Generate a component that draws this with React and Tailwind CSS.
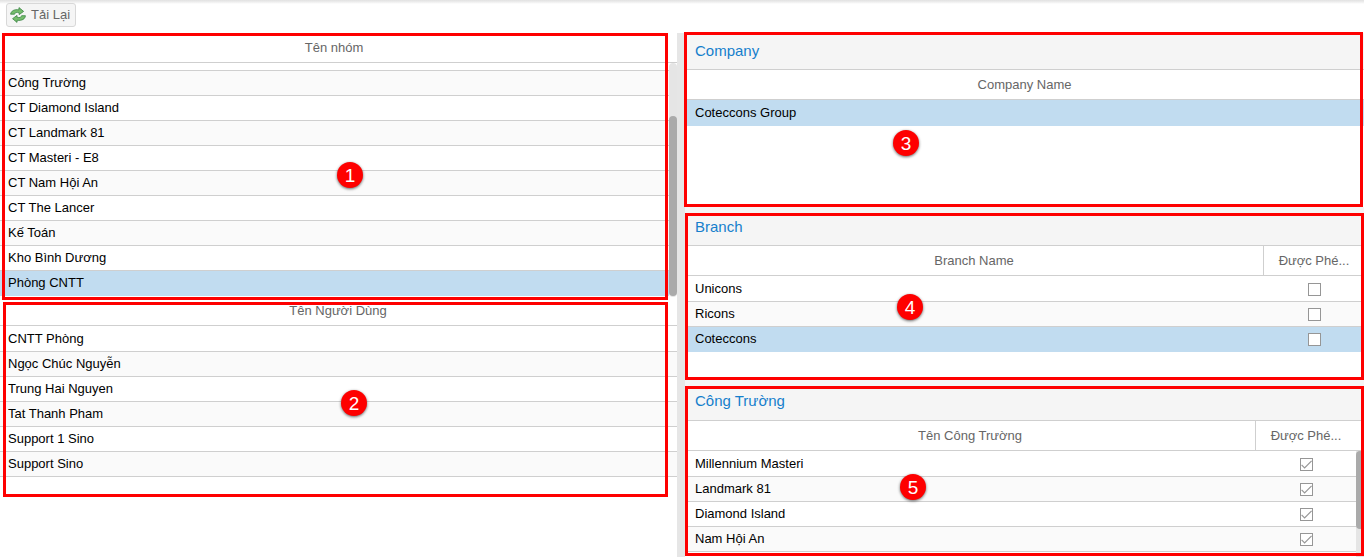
const groups = ['Công Trường', 'CT Diamond Island', 'CT Landmark 81', 'CT Masteri - E8', 'CT Nam Hội An', 'CT The Lancer', 'Kế Toán', 'Kho Bình Dương', 'Phòng CNTT'];
const users = ['CNTT Phòng', 'Ngọc Chúc Nguyễn', 'Trung Hai Nguyen', 'Tat Thanh Pham', 'Support 1 Sino', 'Support Sino'];
const branches = ['Unicons', 'Ricons', 'Coteccons'];
const sites = ['Millennium Masteri', 'Landmark 81', 'Diamond Island', 'Nam Hội An'];

function Check({ checked }) {
  return (
    <svg width="13" height="13" viewBox="0 0 13 13" className="block shrink-0">
      <rect x="0.5" y="0.5" width="12" height="12" fill="#fff" stroke="#969696" />
      {checked && <path d="M1.6 6.8L4.6 9.8L11.6 2.8" fill="none" stroke="#969696" strokeWidth="1.2" />}
    </svg>
  );
}

function Row({ text, alt, selected, first, check, checkCell = '' }) {
  const bg = selected ? 'bg-[#c1dcf0] border-[#c1dcf0]' : alt ? 'bg-[#fafafa] border-[#cfcfcf]' : 'bg-white border-[#cfcfcf]';
  return (
    <div className={`flex shrink-0 items-center border-b text-[13px] text-black ${first ? 'h-[26px] pt-px' : 'h-[25px]'} ${bg}`}>
      <div className="min-w-0 flex-1 truncate">{text}</div>
      {check !== undefined && (
        <div className={`flex justify-center ${checkCell}`}>
          <Check checked={check} />
        </div>
      )}
    </div>
  );
}

function Title({ children, className }) {
  return <div className={`flex shrink-0 items-center border-b border-[#cfcfcf] bg-[#f5f5f5] pl-2.5 text-[15px] text-[#157fcc] ${className}`}>{children}</div>;
}

function ColumnHead({ children, className = 'h-[30px]' }) {
  return <div className={`flex shrink-0 border-b border-[#cfcfcf] text-[13px] text-[#666] ${className}`}>{children}</div>;
}

function Badge({ n, className }) {
  return (
    <div className={`absolute flex size-[26px] items-center justify-center rounded-full bg-[#fe0000] text-[19px] leading-none text-white shadow-[0_1px_3px_rgba(0,0,0,0.6)] ${className}`}>{n}</div>
  );
}

function ReloadIcon() {
  return (
    <svg width="16" height="16" viewBox="0 0 16 16">
      <path d="M0.6 7.2C1 4 4.4 2 8.8 2.9L9 0.6L13.6 4.4L9.2 7.6V5.8C6.5 4.9 4.8 5.4 4.5 7.2Z" fill="#76bd6c" stroke="#398442" strokeWidth="0.8" />
      <path d="M15.4 8.7C15.2 12 11.8 14 7.2 13.2L7 15.4L2.6 11.7L7 8.4V10.2C9.5 11.1 11.3 10.5 11.6 8.7Z" fill="#76bd6c" stroke="#398442" strokeWidth="0.8" />
    </svg>
  );
}

export default function App() {
  return (
    <div className="relative flex h-[557px] w-[1364px] flex-col overflow-hidden bg-white font-['Liberation_Sans',Arial,sans-serif] leading-4">
      <div className="flex h-[33px] shrink-0 bg-[linear-gradient(#e1e1e1,#eeeeee_2px,#fff_4px)] pt-[3px] pl-1.5">
        <button className="flex h-6 w-[70px] items-center gap-[5px] rounded-[3px] border border-[#d8d8d8] bg-[#f5f5f5] pl-[3px] text-[13px] text-[#666]">
          <ReloadIcon />
          Tải Lại
        </button>
      </div>
      <div className="flex min-h-0 flex-1">
        <section className="flex w-[677px] flex-col">
          <ColumnHead>
            <div className="w-[668px] pt-[7px] text-center">Tên nhóm</div>
          </ColumnHead>
          <div className="flex h-[234px] shrink-0">
            <div className="flex-1">
              <div className="h-2 border-b border-[#cfcfcf]" />
              {groups.map((g, i) => (
                <div key={g} className="[&>div]:pl-2">
                  <Row text={g} alt={i % 2 === 0} selected={i === 8} first={false} />
                </div>
              ))}
            </div>
            <div className="w-2 rounded-full bg-[#e5e5e5] pt-[53px]">
              <div className="h-[180px] rounded-full bg-[#aaa]" />
            </div>
          </div>
          <ColumnHead className="h-[29px]">
            <div className="w-[676px] pt-[6px] text-center">Tên Người Dùng</div>
          </ColumnHead>
          <div className="[&>div]:pl-2">
            {users.map((u, i) => (
              <Row key={u} text={u} alt={i % 2 === 1} first={i === 0} />
            ))}
          </div>
        </section>
        <div className="w-2 bg-[#e6e6e6]" />
        <section className="flex min-w-0 flex-1 flex-col">
          <Title className="h-[37px]">Company</Title>
          <ColumnHead>
            <div className="flex-1 pt-[7px] text-center">Company Name</div>
          </ColumnHead>
          <div className="h-[107px] shrink-0 [&>div]:pl-2.5">
            <Row text="Coteccons Group" selected first />
          </div>
          <div className="h-1.5 shrink-0 bg-[#f5f5f5]" />
          <Title className="h-[33px] pb-[5px]">Branch</Title>
          <ColumnHead>
            <div className="w-[578px] pt-[7px] text-center">Branch Name</div>
            <div className="flex-1 border-l border-[#cfcfcf] pt-[7px] text-center">Được Phé...</div>
          </ColumnHead>
          <div className="h-[104px] shrink-0 [&>div]:pl-2.5">
            {branches.map((b, i) => (
              <Row key={b} text={b} alt={i === 1} selected={i === 2} first={i === 0} check={false} checkCell="w-[99px]" />
            ))}
          </div>
          <div className="h-1.5 shrink-0 bg-[#f5f5f5]" />
          <Title className="h-[35px] pb-1">Công Trường</Title>
          <ColumnHead>
            <div className="w-[570px] pt-[7px] text-center">Tên Công Trường</div>
            <div className="w-[101px] border-l border-[#cfcfcf] pt-[7px] text-center">Được Phé...</div>
          </ColumnHead>
          <div className="flex min-h-0 flex-1">
            <div className="flex-1 [&>div]:pl-2.5">
              {sites.map((s, i) => (
                <Row key={s} text={s} alt={i % 2 === 1} first={i === 0} check checkCell="w-[99px]" />
              ))}
            </div>
            <div className="w-2 bg-[#e5e5e5]">
              <div className="h-[78px] rounded-full bg-[#aaa]" />
            </div>
          </div>
        </section>
      </div>

      <div className="absolute top-[33px] left-[2px] h-[267px] w-[666px] border-3 border-[#fe0000]" />
      <div className="absolute top-[302px] left-[3px] h-[195px] w-[665px] border-3 border-[#fe0000]" />
      <div className="absolute top-[32px] left-[684px] h-[175px] w-[679px] border-3 border-[#fe0000]" />
      <div className="absolute top-[213px] left-[685px] h-[167px] w-[679px] border-3 border-[#fe0000]" />
      <div className="absolute top-[386px] left-[685px] h-[170px] w-[679px] border-3 border-[#fe0000]" />
      <Badge n={1} className="top-[162px] left-[337px]" />
      <Badge n={2} className="top-[390px] left-[341px]" />
      <Badge n={3} className="top-[130px] left-[893px]" />
      <Badge n={4} className="top-[294px] left-[897px]" />
      <Badge n={5} className="top-[474px] left-[900px]" />
    </div>
  );
}
